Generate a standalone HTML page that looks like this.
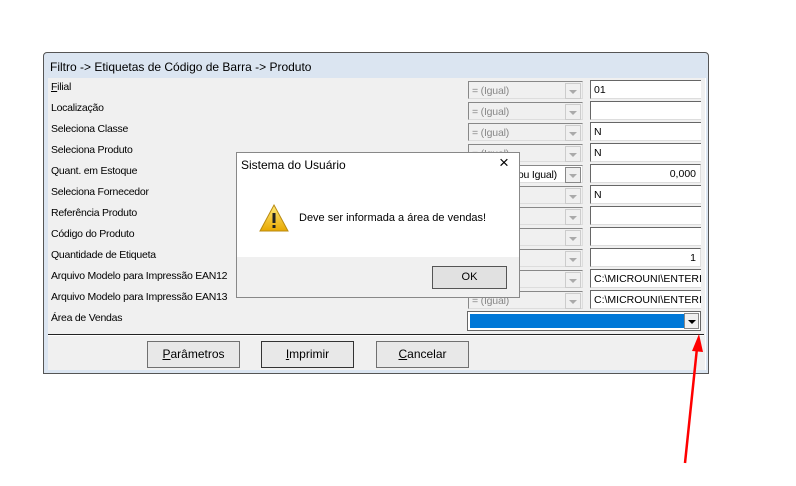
<!DOCTYPE html>
<html><head><style>
body{margin:0;width:796px;height:486px;background:#fff;position:relative;font-family:"Liberation Sans",sans-serif;font-size:11px;color:#000;overflow:hidden}
.abs{position:absolute}
.win{left:43px;top:52px;width:664px;height:320px;border:1px solid #555;background:#dbe5f1;border-radius:4px 4px 0 0}
.content{left:48px;top:78px;width:657px;height:292px;background:#f0f0f0;border-right:1px solid #fff}
.lbl{left:51px;font-size:10.5px;letter-spacing:-0.25px}
.cb{left:468px;width:115px;height:18px;background:#f0f0f0;border:1px solid #888;border-right-color:#ddd;border-bottom-color:#ddd;color:#888;line-height:18px;padding-left:3px;box-sizing:border-box;font-size:10.5px;letter-spacing:-0.2px}
.cb .ar{position:absolute;right:1px;top:1px;width:14px;height:14px;background:#f0f0f0;border:1px solid #ccc;}
.cb .ar:after{content:"";position:absolute;left:3px;top:6px;border:4px solid transparent;border-top:4px solid #aaa;border-bottom:0}
.tb{left:590px;width:111px;height:19px;background:#fff;border:1px solid #666;border-right:0;border-bottom-color:#ddd;box-sizing:border-box;line-height:18px;padding-left:3px;font-size:10.5px;overflow:hidden;white-space:nowrap}
.btn{top:341px;width:93px;height:27px;border:1px solid #707070;background:#e8e8e8;box-sizing:border-box;text-align:center;line-height:25px;font-size:12px}
</style></head><body>
<div class="abs win"></div>
<div class="abs" style="left:50px;top:60px;font-size:12px">Filtro -&gt; Etiquetas de Código de Barra -&gt; Produto</div>
<div class="abs content"></div>

<div class="abs lbl" style="top:81px"><u>F</u>ilial</div>
<div class="abs lbl" style="top:102px">Localização</div>
<div class="abs lbl" style="top:123px">Seleciona Classe</div>
<div class="abs lbl" style="top:144px">Seleciona Produto</div>
<div class="abs lbl" style="top:165px">Quant. em Estoque</div>
<div class="abs lbl" style="top:186px">Seleciona Fornecedor</div>
<div class="abs lbl" style="top:207px">Referência Produto</div>
<div class="abs lbl" style="top:228px">Código do Produto</div>
<div class="abs lbl" style="top:249px">Quantidade de Etiqueta</div>
<div class="abs lbl" style="top:270px">Arquivo Modelo para Impressão EAN12</div>
<div class="abs lbl" style="top:291px">Arquivo Modelo para Impressão EAN13</div>
<div class="abs lbl" style="top:312px">Área de Vendas</div>

<div class="abs cb" style="top:81px">= (Igual)<span class="ar"></span></div>
<div class="abs cb" style="top:102px">= (Igual)<span class="ar"></span></div>
<div class="abs cb" style="top:123px">= (Igual)<span class="ar"></span></div>
<div class="abs cb" style="top:144px">= (Igual)<span class="ar"></span></div>
<div class="abs cb" style="top:165px;color:#000;background:#fff">&gt;= (Maior ou Igual)<span class="ar" style="border-color:#888"></span></div>
<div class="abs cb" style="top:186px"><span class="ar"></span></div>
<div class="abs cb" style="top:207px"><span class="ar"></span></div>
<div class="abs cb" style="top:228px"><span class="ar"></span></div>
<div class="abs cb" style="top:249px"><span class="ar"></span></div>
<div class="abs cb" style="top:270px"><span class="ar"></span></div>
<div class="abs cb" style="top:291px">= (Igual)<span class="ar"></span></div>

<div class="abs tb" style="top:80px">01</div>
<div class="abs tb" style="top:101px"></div>
<div class="abs tb" style="top:122px">N</div>
<div class="abs tb" style="top:143px">N</div>
<div class="abs tb" style="top:164px;text-align:right;padding-right:4px;border-right:1px solid #ddd">0,000</div>
<div class="abs tb" style="top:185px">N</div>
<div class="abs tb" style="top:206px"></div>
<div class="abs tb" style="top:227px"></div>
<div class="abs tb" style="top:248px;text-align:right;padding-right:4px;border-right:1px solid #ddd">1</div>
<div class="abs tb" style="top:269px">C:\MICROUNI\ENTERI</div>
<div class="abs tb" style="top:290px">C:\MICROUNI\ENTERI</div>

<div class="abs" style="left:467px;top:311px;width:234px;height:20px;border:1px solid #666;background:#fff;box-sizing:border-box">
 <div class="abs" style="left:2px;top:2px;width:214px;height:14px;background:#0078d7"></div>
 <div class="abs" style="left:216px;top:1px;width:15px;height:16px;background:#f0f0f0;border:1px solid #888;box-sizing:border-box"></div>
 <div class="abs" style="left:220px;top:8px;border:4px solid transparent;border-top:4px solid #000;border-bottom:0"></div>
</div>

<div class="abs" style="left:48px;top:334px;width:656px;height:1px;background:#222"></div>
<div class="abs" style="left:48px;top:335px;width:656px;height:1px;background:#fff"></div>
<div class="abs btn" style="left:147px"><u>P</u>arâmetros</div>
<div class="abs btn" style="left:261px;border:1px solid #333"><u>I</u>mprimir</div>
<div class="abs btn" style="left:376px"><u>C</u>ancelar</div>

<!-- dialog -->
<div class="abs" style="left:236px;top:152px;width:284px;height:146px;border:1px solid #888;background:#fff;box-sizing:border-box">
 <div class="abs" style="left:4px;top:5px;font-size:12px">Sistema do Usuário</div>
 <div class="abs" style="left:262px;top:0px;font-size:17px">×</div>
 <svg class="abs" style="left:21px;top:50px" width="32" height="30"><defs><linearGradient id="g" x1="0" y1="0" x2="0" y2="1"><stop offset="0" stop-color="#ffe97a"/><stop offset="1" stop-color="#e8a800"/></linearGradient></defs><path d="M16 2 L30 28 L2 28 Z" fill="url(#g)" stroke="#b98a10" stroke-width="1"/><rect x="14.5" y="10" width="3" height="10" fill="#222"/><rect x="14.5" y="22" width="3" height="3" fill="#222"/></svg>
 <div class="abs" style="left:62px;top:59px;font-size:11px">Deve ser informada a área de vendas!</div>
 <div class="abs" style="left:0;top:104px;width:282px;height:40px;background:#f0f0f0"></div>
 <div class="abs" style="left:195px;top:113px;width:75px;height:23px;border:1px solid #555;background:#e1e1e1;box-sizing:border-box;text-align:center;line-height:21px">OK</div>
</div>

<svg class="abs" style="left:0;top:0" width="796" height="486"><line x1="685" y1="463" x2="697" y2="348" stroke="#f00" stroke-width="2.5"/><path d="M699 334 L692 351 L703 352 Z" fill="#f00"/></svg>
</body></html>
